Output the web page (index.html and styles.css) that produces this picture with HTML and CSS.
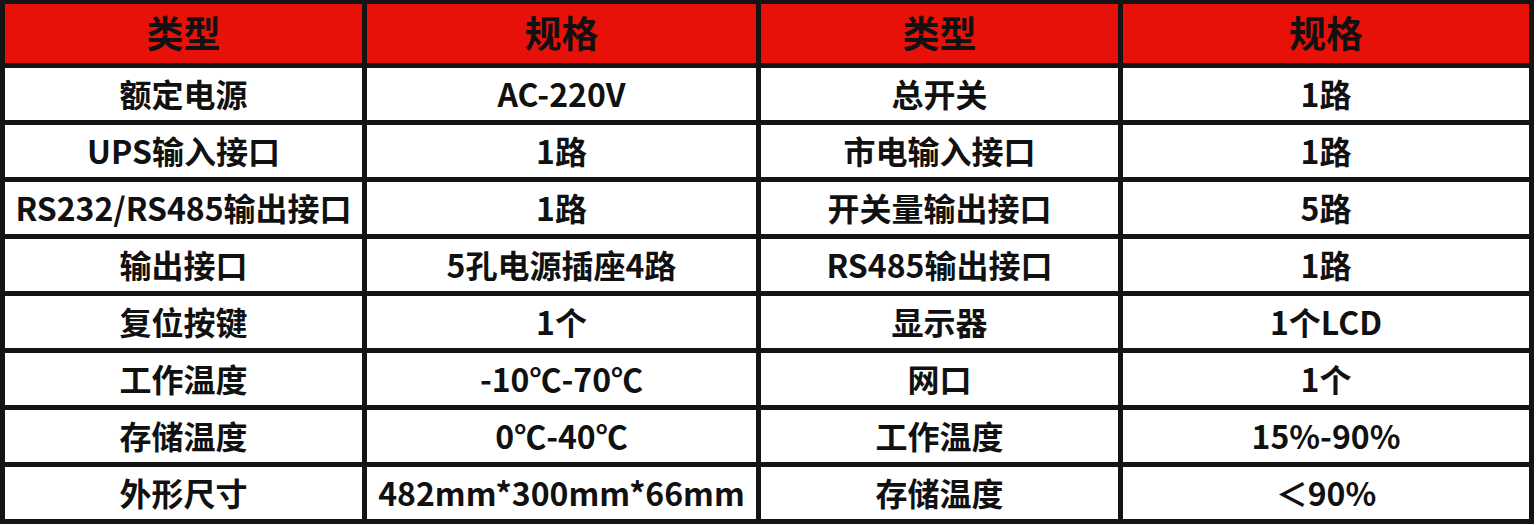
FILE: index.html
```html
<!DOCTYPE html>
<html lang="zh-CN">
<head>
<meta charset="utf-8">
<title>规格表</title>
<link rel="stylesheet" href="styles.css">
</head>
<body>
<table class="spec">
  <colgroup>
    <col class="c1"><col class="c2"><col class="c3"><col class="c4">
  </colgroup>
  <thead>
    <tr class="head"><th>类型</th><th>规格</th><th>类型</th><th>规格</th></tr>
  </thead>
  <tbody>
    <tr><td>额定电源</td><td>AC-220V</td><td>总开关</td><td>1路</td></tr>
    <tr><td>UPS输入接口</td><td>1路</td><td>市电输入接口</td><td>1路</td></tr>
    <tr><td>RS232/RS485输出接口</td><td>1路</td><td>开关量输出接口</td><td>5路</td></tr>
    <tr><td>输出接口</td><td>5孔电源插座4路</td><td>RS485输出接口</td><td>1路</td></tr>
    <tr><td>复位按键</td><td>1个</td><td>显示器</td><td>1个LCD</td></tr>
    <tr><td>工作温度</td><td>-10℃-70℃</td><td>网口</td><td>1个</td></tr>
    <tr><td>存储温度</td><td>0℃-40℃</td><td>工作温度</td><td>15%-90%</td></tr>
    <tr><td>外形尺寸</td><td>482mm*300mm*66mm</td><td>存储温度</td><td>＜90%</td></tr>
  </tbody>
</table>
</body>
</html>
```
FILE: styles.css
```css
html, body {
  margin: 0;
  padding: 0;
  background: #ffffff;
}
.spec {
  border-collapse: separate;
  border-spacing: 5px 5px;
  background: #141414;
  table-layout: fixed;
  width: 1534px;
  margin-top: -1px;
  font-family: "Noto Sans CJK SC", "Noto Sans", sans-serif;
  color: #111111;
}
.c1 { width: 357px; }
.c2 { width: 389px; }
.c3 { width: 357px; }
.c4 { width: 406px; }
.spec th,
.spec td {
  padding: 0;
  text-align: center;
  vertical-align: middle;
  white-space: nowrap;
  overflow: hidden;
}
.spec th {
  background: #e8110a;
  height: 55px;
  padding-bottom: 4px;
  font-size: 37px;
  font-weight: 700;
}
.spec td {
  background: #ffffff;
  height: 49px;
  padding-bottom: 3px;
  font-size: 32px;
  font-weight: 700;
}
```
